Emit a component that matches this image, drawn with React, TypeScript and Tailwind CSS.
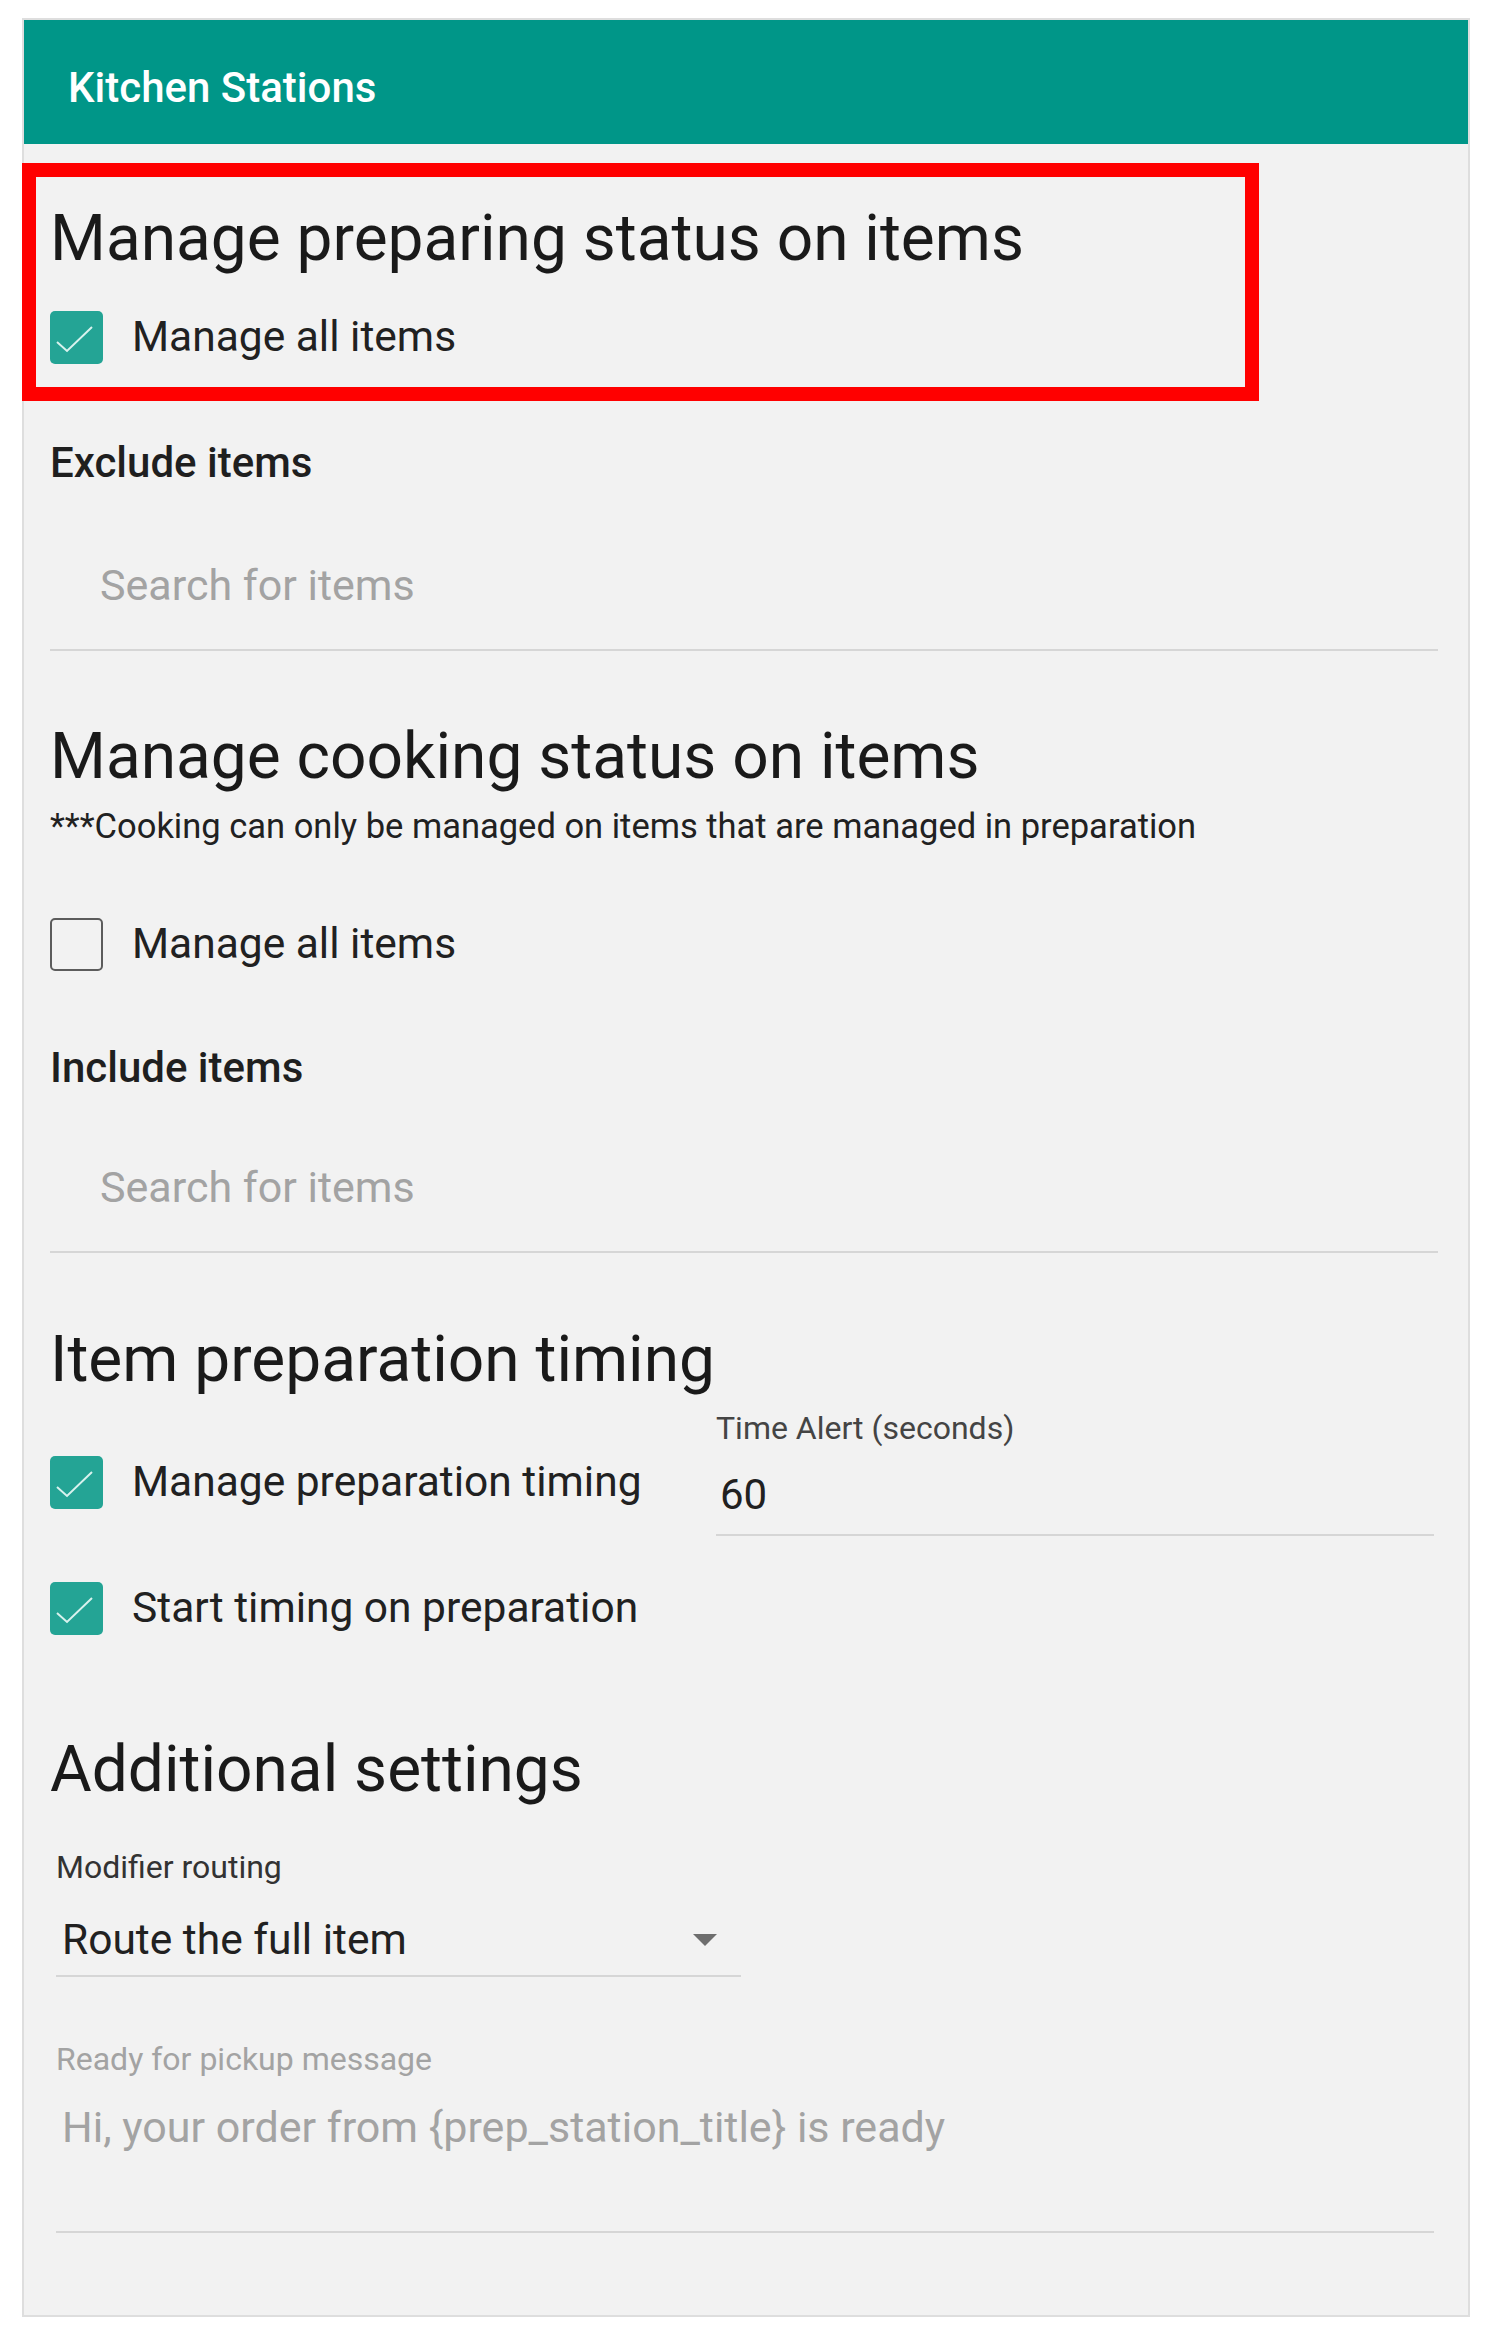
const font = { fontFamily: "Roboto, 'Noto Sans', sans-serif" };

function Box({ checked }: { checked: boolean }) {
  if (!checked) {
    return <div className="h-[53px] w-[53px] shrink-0 rounded-[5px] border-2 border-[#5c5c5c]" />;
  }
  return (
    <div className="h-[53px] w-[53px] shrink-0 rounded-[5px] bg-[#24a495]">
      <svg width="53" height="53" viewBox="0 0 53 53" fill="none">
        <path d="M7 31 L17 40 L42 16" stroke="#d8f2ee" strokeWidth="2" />
      </svg>
    </div>
  );
}

function CheckRow({ checked, label, className = "" }: { checked: boolean; label: string; className?: string }) {
  return (
    <div className={`flex h-[53px] items-center gap-[29px] ${className}`}>
      <Box checked={checked} />
      <span className="text-[42.5px] leading-none text-[#212121]">{label}</span>
    </div>
  );
}

function Heading({ children, className = "" }: { children: React.ReactNode; className?: string }) {
  return <h2 className={`text-[64px] leading-none text-[#1a1a1a] ${className}`}>{children}</h2>;
}

function SearchField({ className = "" }: { className?: string }) {
  return (
    <div className={className}>
      <div className="pl-[50px] text-[43px] leading-none text-[#a3a3a3]">Search for items</div>
      <div className="mt-[42px] h-[2px] bg-[#d6d6d6]" />
    </div>
  );
}

export default function App() {
  return (
    <div className="min-h-screen bg-white pt-[18px] pl-[22px]" style={font}>
      <div className="relative w-[1448px] border-2 border-[#dedede] bg-[#f2f2f2]">
        <div className="flex h-[124px] items-center bg-[#009688] pl-[44px] pt-[12px]">
          <span className="text-[42px] font-medium leading-none text-white">Kitchen Stations</span>
        </div>

        <div className="pl-[26px] pr-[30px] pb-[82px]">
          <Heading className="mt-[63px]">Manage preparing status on items</Heading>
          <CheckRow checked label="Manage all items" className="mt-[40px]" />

          <div className="mt-[78px] text-[42px] font-medium leading-none text-[#1f1f1f]">Exclude items</div>
          <SearchField className="mt-[80px]" />

          <Heading className="mt-[74px]">Manage cooking status on items</Heading>
          <p className="mt-[20px] text-[34.5px] leading-none text-[#212121]">
            ***Cooking can only be managed on items that are managed in preparation
          </p>
          <CheckRow checked={false} label="Manage all items" className="mt-[74px]" />

          <div className="mt-[76px] text-[42px] font-medium leading-none text-[#1f1f1f]">Include items</div>
          <SearchField className="mt-[77px]" />

          <Heading className="mt-[75px]">Item preparation timing</Heading>
          <div className="mt-[20px] flex">
            <div className="w-[666px] shrink-0 pt-[44px]">
              <CheckRow checked label="Manage preparation timing" />
              <CheckRow checked label="Start timing on preparation" className="mt-[73px]" />
            </div>
            <div className="flex-1 pr-[4px]">
              <div className="text-[32px] leading-none text-[#444444]">Time Alert (seconds)</div>
              <div className="mt-[30px] pl-[4px] text-[42px] leading-none text-[#212121]">60</div>
              <div className="mt-[18px] h-[2px] bg-[#d6d6d6]" />
            </div>
          </div>

          <Heading className="mt-[103px]">Additional settings</Heading>
          <div className="ml-[6px]">
            <div className="mt-[49px] text-[32px] leading-none text-[#333333]">Modifier routing</div>
            <div className="w-[685px]">
              <div className="mt-[36px] flex items-center justify-between pl-[6px] pr-[24px]">
                <span className="text-[42.5px] leading-none text-[#212121]">Route the full item</span>
                <svg width="24" height="12" viewBox="0 0 24 12">
                  <path d="M0 0 L24 0 L12 12 Z" fill="#6e6e6e" />
                </svg>
              </div>
              <div className="mt-[14px] h-[2px] bg-[#d6d6d6]" />
            </div>
            <div className="mt-[66px] text-[32px] leading-none text-[#a3a3a3]">Ready for pickup message</div>
            <div className="mt-[31px] pl-[6px] text-[43px] leading-none text-[#a3a3a3]">
              Hi, your order from {"{prep_station_title}"} is ready
            </div>
            <div className="mt-[82px] mr-[4px] h-[2px] bg-[#d6d6d6]" />
          </div>
        </div>

        <div className="pointer-events-none absolute left-[-2px] top-[143px] h-[238px] w-[1237px] border-[14px] border-[#ff0000]" />
      </div>
    </div>
  );
}
